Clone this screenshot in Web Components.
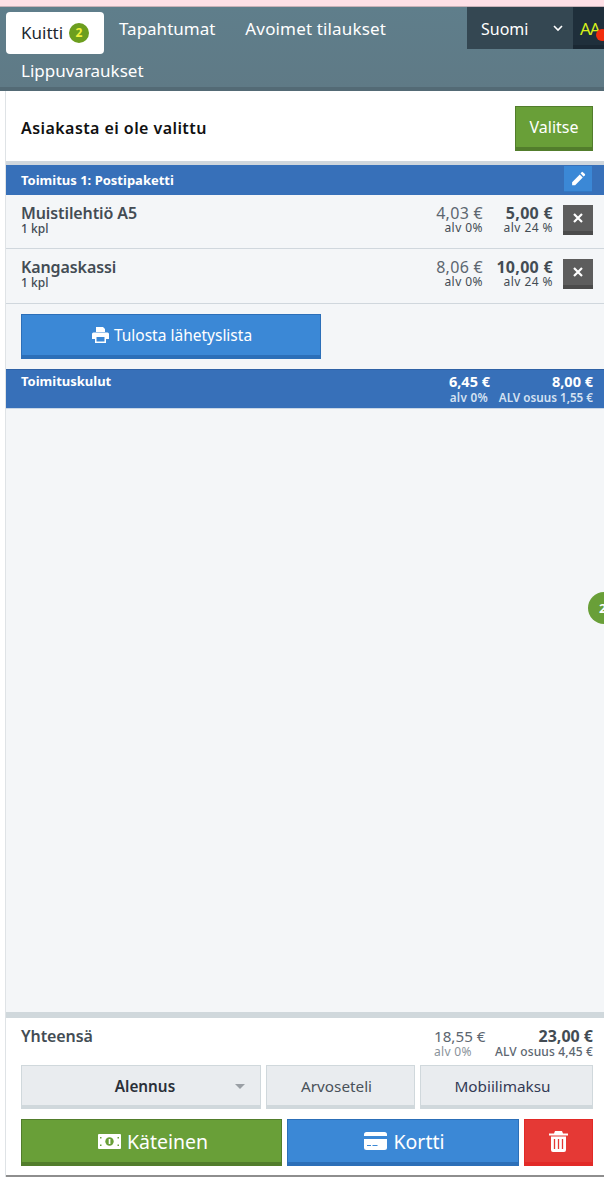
<!DOCTYPE html>
<html lang="fi">
<head>
<meta charset="utf-8">
<title>Kuitti</title>
<style>
html,body{margin:0;padding:0;height:100%;background:#fff;overflow:hidden;font-family:"Noto Sans","Open Sans",sans-serif;}
</style>
</head>
<body>
<pos-app>
  <top-bar slot="top"></top-bar>
  <customer-row slot="top"></customer-row>
  <section-bar slot="top" title-text="Toimitus 1: Postipaketti"></section-bar>
  <line-item slot="top" name="Muistilehtiö A5" net="4,03 €" gross="5,00 €"></line-item>
  <line-item slot="top" name="Kangaskassi" net="8,06 €" gross="10,00 €"></line-item>
  <print-row slot="top"></print-row>
  <shipping-row slot="top"></shipping-row>
  <cart-footer slot="bottom"></cart-footer>
</pos-app>

<script>
class PosApp extends HTMLElement {
    constructor(){
        super()
        this.attachShadow({mode:"open"}).innerHTML = `
        <style>
        :host{display:flex;flex-direction:column;height:1177px;background:#fff;position:relative;overflow:hidden;}
        .pink{height:6px;background:#fde0e6;border-bottom:1px solid #c9b2b8;flex:none;}
        .main{flex:1;display:flex;flex-direction:column;margin-left:5px;border-left:1px solid #dfe3e6;background:#f4f6f8;min-height:0;}
        .grow{flex:1;}
        .bubble{position:absolute;left:588px;top:592px;width:32px;height:32px;border-radius:50%;background:#699f38;color:#fff;font:700 13px/32px "Noto Sans",sans-serif;padding-left:11px;box-sizing:border-box;}
        </style>
        <div class="pink"></div>
        <div class="main">
            <slot name="top"></slot>
            <div class="grow"></div>
            <slot name="bottom"></slot>
        </div>
        <div class="bubble">2</div>
        `;
    }
}

class TopBar extends HTMLElement {
    constructor(){
        super()
        this.attachShadow({mode:"open"}).innerHTML = `
        <style>
        :host{display:block;margin-left:-6px;height:84px;box-sizing:border-box;background:linear-gradient(#5f7e8b,#5f7a86);border-bottom:4px solid #536a75;position:relative;}
        .wrap{display:flex;align-items:flex-start;justify-content:space-between;}
        .tabs{display:flex;flex-wrap:wrap;width:467px;box-sizing:border-box;padding-left:6px;font-size:17px;color:#fff;}
        .tab{height:42px;line-height:44px;padding:0 15px;}
        .tab.open{letter-spacing:.15px;}
        .tab.active{margin-top:5px;background:#fff;color:#1c2730;border-radius:4px;padding:0 15px;height:42px;line-height:42px;display:flex;align-items:center;gap:6px;width:98px;box-sizing:border-box;margin-bottom:-5px;}
        .tab.second{height:40px;line-height:44px;}
        .badge{width:20px;height:20px;border-radius:50%;background:#6c9e1e;color:#f2f23c;font-size:12px;font-weight:700;line-height:20px;text-align:center;}
        .tools{display:flex;height:42px;}
        .lang{width:106px;box-sizing:border-box;background:#344752;color:#fff;font-size:16px;line-height:44px;padding-left:14px;position:relative;}
        .lang svg{position:absolute;left:86px;top:18px;}
        .aa{width:31px;background:#1f2f3b;border-bottom:4px solid #1a2833;box-sizing:border-box;color:#d8f01a;font-size:17px;line-height:44px;padding-left:7px;position:relative;overflow:hidden;letter-spacing:-1px;}
        .dot{position:absolute;left:23px;top:22px;width:12px;height:12px;border-radius:50%;background:#f22c0c;}
        </style>
        <div class="wrap">
            <div class="tabs">
                <div class="tab active">Kuitti <span class="badge">2</span></div>
                <div class="tab">Tapahtumat</div>
                <div class="tab open">Avoimet tilaukset</div>
                <div class="tab second">Lippuvaraukset</div>
            </div>
            <div class="tools">
                <div class="lang">Suomi<svg width="10" height="7" viewBox="0 0 10 7"><path d="M1 1l4 4 4-4" fill="none" stroke="#fff" stroke-width="1.6"/></svg></div>
                <div class="aa">AA<span class="dot"></span></div>
            </div>
        </div>
        `;
    }
}

class CustomerRow extends HTMLElement {
    constructor(){
        super()
        this.attachShadow({mode:"open"}).innerHTML = `
        <style>
        :host{display:flex;justify-content:space-between;align-items:center;height:74px;box-sizing:border-box;background:#fff;border-bottom:4px solid #d0d7dd;padding:5px 11px 0 15px;}
        .name{font-size:16px;font-weight:600;color:#111;letter-spacing:.43px;margin-bottom:2px;}
        button{all:unset;box-sizing:border-box;width:78px;height:45px;background:#699f38;border:1px solid #527d2c;border-bottom:4px solid #527d2c;color:#fff;font-size:16px;text-align:center;line-height:38px;}
        </style>
        <span class="name">Asiakasta ei ole valittu</span>
        <button>Valitse</button>
        `;
    }
}

class SectionBar extends HTMLElement {
    constructor(){
        super()
        const title = this.getAttribute("title-text");
        this.attachShadow({mode:"open"}).innerHTML = `
        <style>
        :host{display:flex;justify-content:space-between;align-items:flex-start;height:30px;box-sizing:border-box;background:#3770b9;color:#fff;padding:0 12px 0 15px;}
        .t{font-size:13px;font-weight:700;line-height:30px;}
        .edit{margin-top:1px;width:28px;height:26px;box-sizing:border-box;background:#3b88d6;border-bottom:1px solid #3178c4;display:flex;align-items:center;justify-content:center;}
        </style>
        <span class="t">${title}</span>
        <span class="edit"><svg width="17" height="17" viewBox="0 0 24 24"><path fill="#fff" d="M3 17.25V21.5h4.25L18 10.7l-4.2-4.2L3 17.25zM21 7.6a1.3 1.3 0 000-1.8L18.2 3a1.3 1.3 0 00-1.8 0l-1.6 1.6 4.2 4.6L21 7.6z"/></svg></span>
        `;
    }
}

class LineItem extends HTMLElement {
    constructor(){
        super()
        const name = this.getAttribute("name");
        const net = this.getAttribute("net");
        const gross = this.getAttribute("gross");
        this.attachShadow({mode:"open"}).innerHTML = `
        <style>
        :host{display:flex;height:54px;box-sizing:border-box;border-bottom:1px solid #d0d7dd;padding:9px 11px 0 15px;color:#434c54;}
        :host(:last-of-type){height:55px;}
        .info{flex:1;}
        .name{font-size:16px;font-weight:600;line-height:18px;letter-spacing:-.1px;}
        .qty{font-size:12px;font-weight:500;line-height:14px;}
        .price{text-align:right;white-space:nowrap;}
        .net{width:60px;}
        .gross{width:70px;}
        .big{font-size:16px;line-height:18px;letter-spacing:.3px;}
        .gross .big{font-weight:700;}
        .net .big{color:#5c6670;}
        .small{font-size:12px;line-height:12px;letter-spacing:.45px;}
        .del{margin:1px 0 0 10px;width:30px;height:30px;box-sizing:border-box;background:#5d5d5d;border-bottom:4px solid #4b4b4b;display:flex;align-items:center;justify-content:center;}
        </style>
        <div class="info">
            <div class="name">${name}</div>
            <div class="qty">1 kpl</div>
        </div>
        <div class="price net"><div class="big">${net}</div><div class="small">alv 0%</div></div>
        <div class="price gross"><div class="big">${gross}</div><div class="small">alv 24 %</div></div>
        <span class="del"><svg width="10" height="10" viewBox="0 0 10 10"><path d="M1 1l8 8M9 1l-8 8" stroke="#fff" stroke-width="2.2"/></svg></span>
        `;
    }
}

class PrintRow extends HTMLElement {
    constructor(){
        super()
        this.attachShadow({mode:"open"}).innerHTML = `
        <style>
        :host{display:block;height:65px;box-sizing:border-box;padding:10px 0 0 15px;}
        .btn{width:300px;height:45px;box-sizing:border-box;background:#3b88d6;border:1px solid #2c6fb8;border-bottom:4px solid #2c6fb8;color:#fff;font-size:15.5px;display:flex;align-items:center;justify-content:center;gap:5px;padding-left:2px;}
        </style>
        <div class="btn">
            <svg width="17" height="16" viewBox="0 0 17 16"><path fill="#fff" d="M4 0h7l2 2v3H4zM1.5 5.500h14A1.500 1.500 0 0117 7v5h-3v4H3v-4H0V7a1.500 1.500 0 011.500-1.500zM4.500 10v4.500h8V10z"/></svg>
            <span>Tulosta lähetyslista</span>
        </div>
        `;
    }
}

class ShippingRow extends HTMLElement {
    constructor(){
        super()
        this.attachShadow({mode:"open"}).innerHTML = `
        <style>
        :host{display:flex;height:40px;box-sizing:border-box;background:#3770b9;border-top:1px solid #2f62a6;border-bottom:1px solid #c8d6e6;color:#fff;padding:3px 11px 0 15px;}
        .t{flex:1;font-size:13px;font-weight:700;line-height:16px;}
        .c{text-align:right;white-space:nowrap;}
        .a{width:60px;}
        .b{width:103px;}
        .big{font-size:14.5px;font-weight:700;line-height:16px;}
        .small{font-size:11.7px;line-height:12px;margin-top:2px;color:#d5e2f2;font-weight:600;}
        .a .small{padding-right:2px;letter-spacing:.3px;}
        </style>
        <div class="t">Toimituskulut</div>
        <div class="c a"><div class="big">6,45 €</div><div class="small">alv 0%</div></div>
        <div class="c b"><div class="big">8,00 €</div><div class="small">ALV osuus 1,55 €</div></div>
        `;
    }
}

class CartFooter extends HTMLElement {
    constructor(){
        super()
        this.attachShadow({mode:"open"}).innerHTML = `
        <style>
        :host{display:block;height:165px;box-sizing:border-box;background:#fff;border-top:6px solid #d0d8dc;border-bottom:2px solid #8e8e8e;padding:9px 11px 0 15px;color:#434c54;}
        .sum{display:flex;height:38px;}
        .t{flex:1;font-size:16px;font-weight:600;line-height:19px;letter-spacing:-.1px;}
        .c{text-align:right;white-space:nowrap;}
        .a{width:51px;text-align:left;}
        .b{width:108px;}
        .big{font-size:15.2px;line-height:19px;}
        .a .big{color:#5c6670;}
        .b .big{font-size:16px;font-weight:700;}
        .small{font-size:12px;line-height:12px;letter-spacing:.15px;}
        .a .small{color:#8a939b;letter-spacing:.3px;}
        .b .small{color:#5c6670;font-weight:500;}
        .row{display:flex;gap:5px;}
        .opt{box-sizing:border-box;height:44px;background:#e9ecef;border:1px solid #d0d8dc;border-bottom:4px solid #d0d8dc;font-size:15.3px;color:#333a55;display:flex;align-items:center;justify-content:center;position:relative;}
        .opt.wide{width:240px;font-weight:600;color:#2a2f38;padding-left:8px;}
        .opt.mid{width:149px;color:#49525a;padding-right:8px;}
        .opt.end{width:173px;padding-right:8px;}
        .caret{position:absolute;left:213px;top:18px;width:0;height:0;border:5px solid transparent;border-top:5px solid #9a9fa5;}
        .pay{margin-top:10px;}
        .p{box-sizing:border-box;height:47px;border-style:solid;border-width:1px 1px 4px;color:#fff;font-size:19.5px;display:flex;align-items:center;justify-content:center;gap:6px;}
        .cash{width:261px;background:#699f38;border-color:#527d2c;padding-left:3px;}
        .card{width:232px;background:#3b88d6;border-color:#2c6fb8;padding-left:3px;}
        .trash{width:69px;background:#e53935;border-color:#e22a27;}
        </style>
        <div class="sum">
            <div class="t">Yhteensä</div>
            <div class="c a"><div class="big">18,55 €</div><div class="small">alv 0%</div></div>
            <div class="c b"><div class="big">23,00 €</div><div class="small">ALV osuus 4,45 €</div></div>
        </div>
        <div class="row">
            <div class="opt wide">Alennus<span class="caret"></span></div>
            <div class="opt mid">Arvoseteli</div>
            <div class="opt end">Mobiilimaksu</div>
        </div>
        <div class="row pay">
            <div class="p cash">
                <svg width="23" height="15" viewBox="0 0 23 15"><rect width="23" height="15" rx="1" fill="#fff"/><circle cx="11.500" cy="7.500" r="4.200" fill="#699f38"/><rect x="10.700" y="5" width="1.700" height="5" fill="#fff"/><path d="M2 3h1.500v1.500H2zM19.500 3H21v1.500h-1.500zM2 10.500h1.500V12H2zM19.500 10.500H21V12h-1.500z" fill="#699f38"/></svg>
                <span>Käteinen</span>
            </div>
            <div class="p card">
                <svg width="23" height="18" viewBox="0 0 23 18"><rect width="23" height="18" rx="2.500" fill="#fff"/><rect y="4" width="23" height="3" fill="#3b88d6"/><path d="M3 13h4v1H3zM8.500 13h5v1h-5z" fill="#3b88d6"/></svg>
                <span>Kortti</span>
            </div>
            <div class="p trash">
                <svg width="19" height="21" viewBox="0 0 19 21"><path fill="#fff" d="M6 0h7l1 2.500h5V4.500H0V2.500h5zM2 5.500h15V19a2 2 0 01-2 2H4a2 2 0 01-2-2z"/><path d="M5.500 8v10M9.500 8v10M13.500 8v10" stroke="#e53935" stroke-width="1.300"/></svg>
            </div>
        </div>
        `;
    }
}

customElements.define("pos-app", PosApp);
customElements.define("top-bar", TopBar);
customElements.define("customer-row", CustomerRow);
customElements.define("section-bar", SectionBar);
customElements.define("line-item", LineItem);
customElements.define("print-row", PrintRow);
customElements.define("shipping-row", ShippingRow);
customElements.define("cart-footer", CartFooter);
</script>
</body>
</html>
